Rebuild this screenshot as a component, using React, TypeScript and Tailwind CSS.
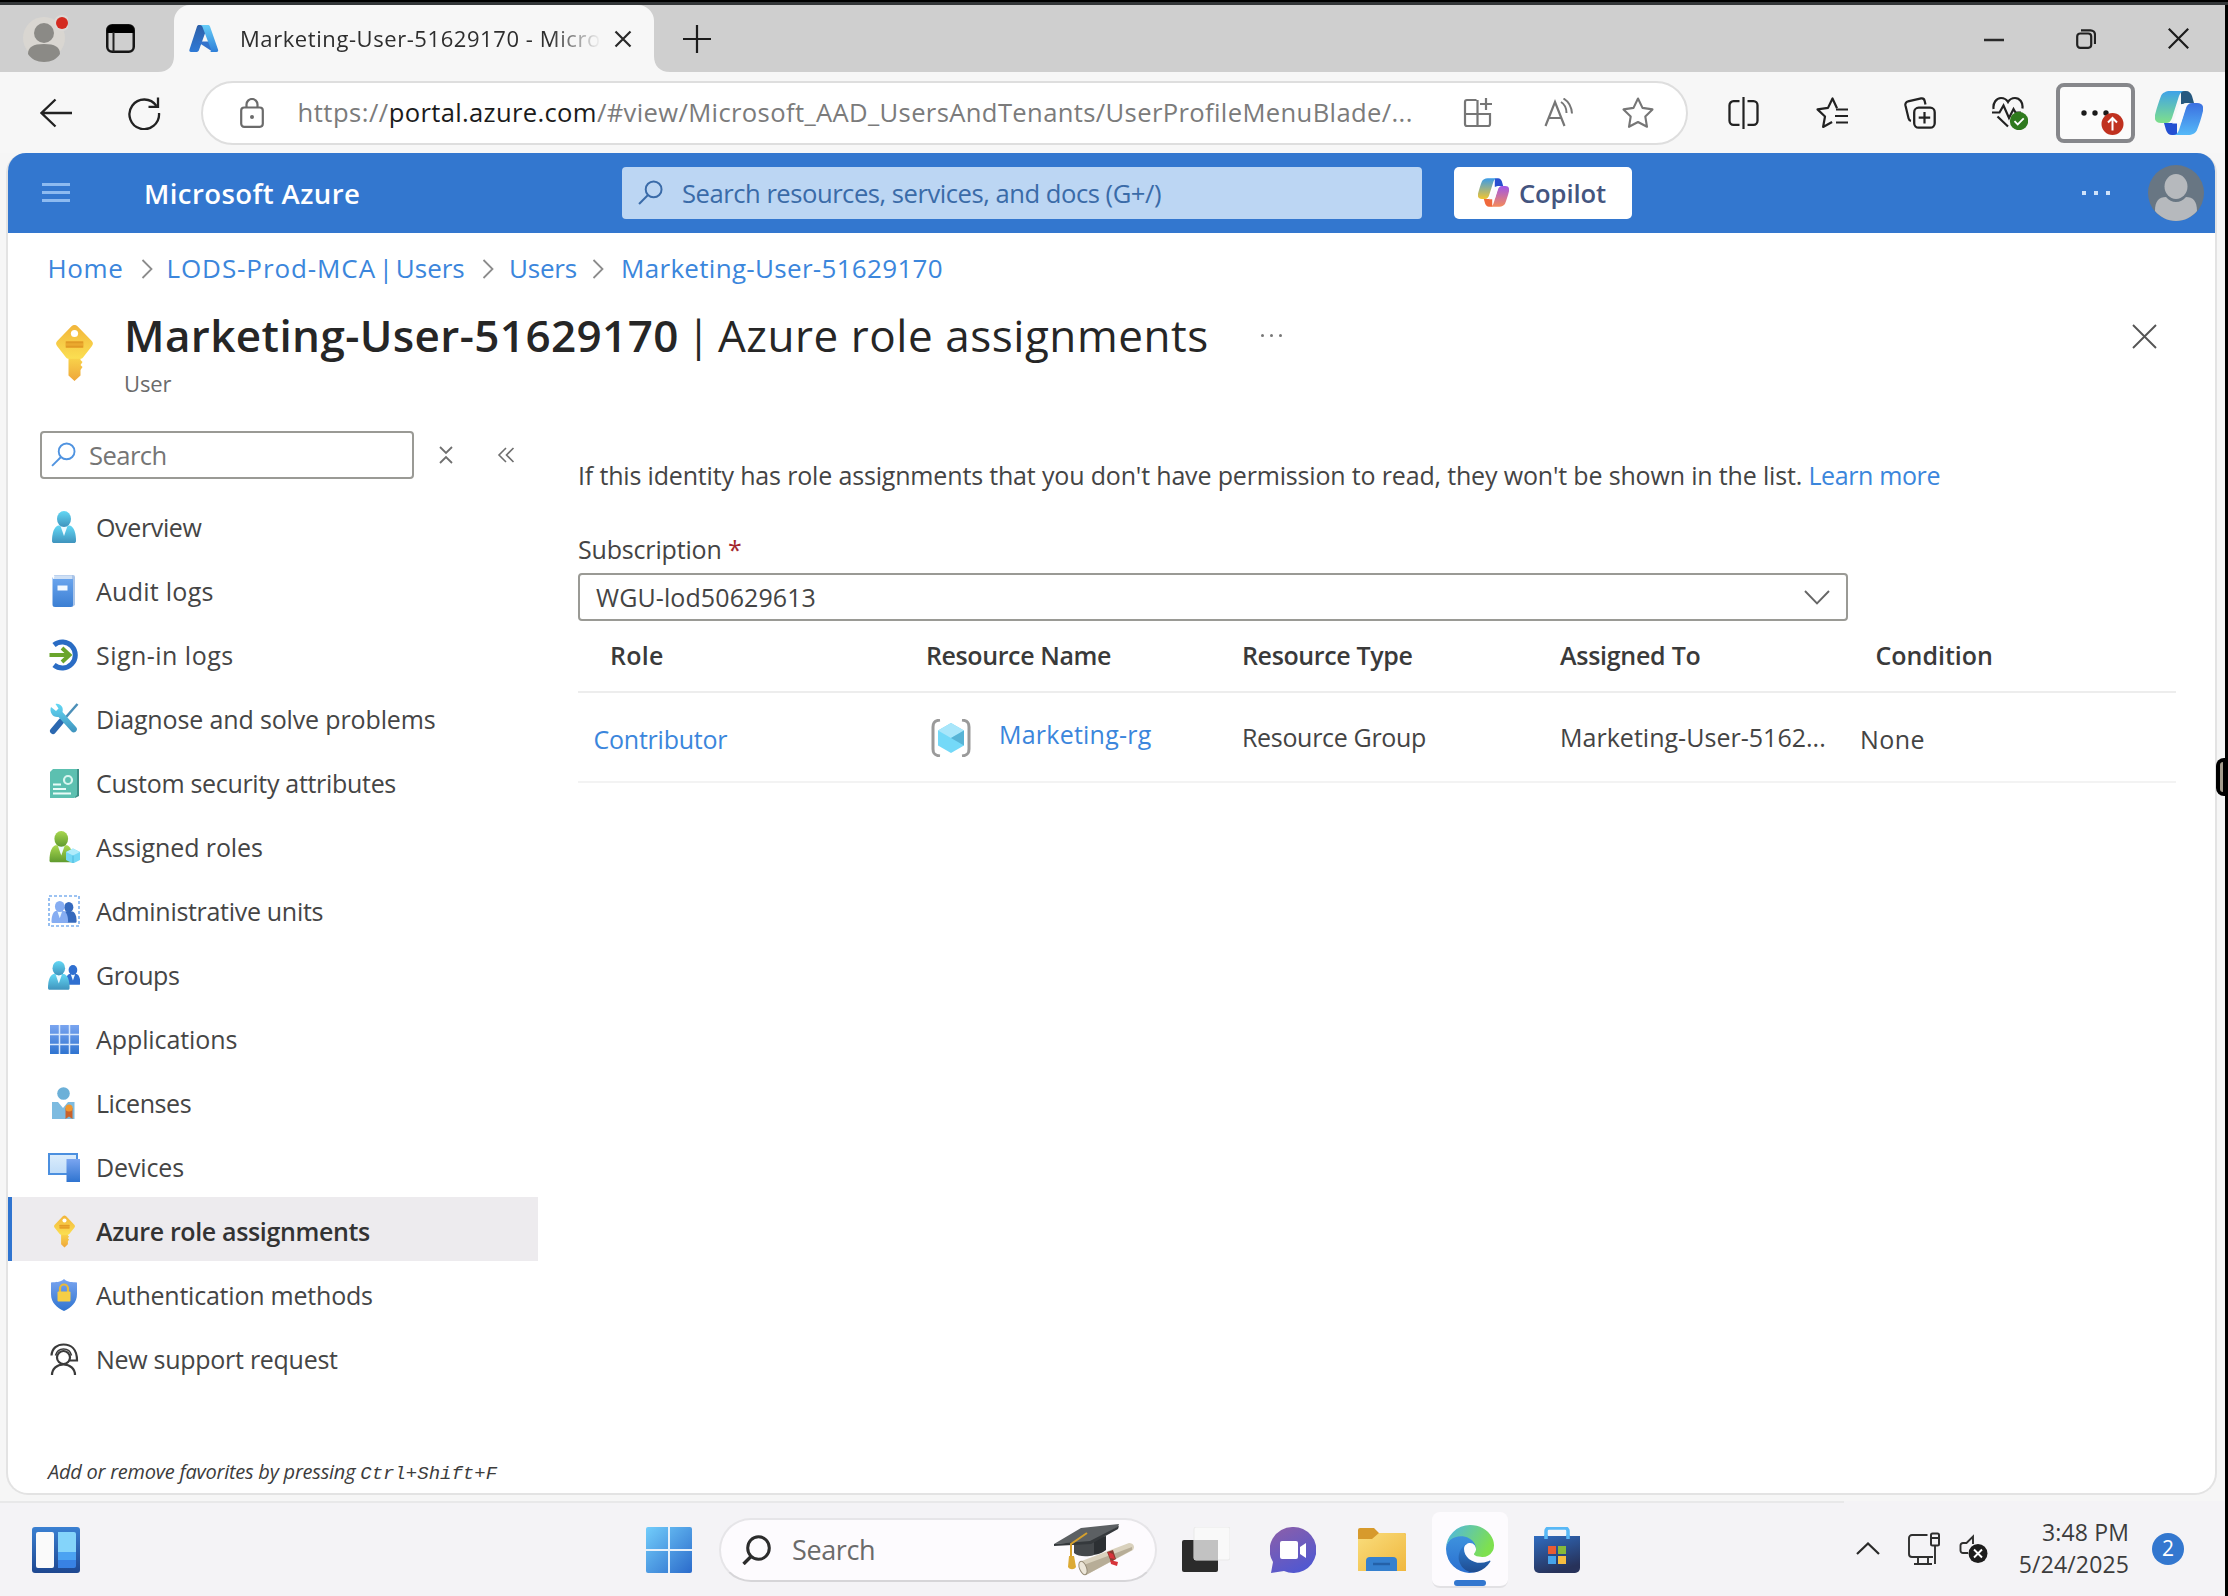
import type { ReactNode } from "react";

type SvgProps = { w: number; h: number; box?: string; className?: string; children: ReactNode };

function Svg({ w, h, box, className = "", children }: SvgProps) {
  return (
    <svg width={w} height={h} viewBox={box ?? `0 0 ${w} ${h}`} fill="none" className={`shrink-0 ${className}`}>
      {children}
    </svg>
  );
}

/* Gradients shared by the icons of the page */
function Gradients() {
  const defs: [string, string, string, number, number][] = [
    ["cyan", "#63d8f5", "#3f93bd", 0, 1],
    ["blue", "#7aa5f0", "#2f74d0", 0, 1],
    ["book", "#6aa5ee", "#3c7fd3", 0, 1],
    ["green", "#a9d84f", "#5f9a2e", 0, 1],
    ["keyTop", "#f2b53a", "#fbdf52", 0, 1],
    ["keyStem", "#fbdc4e", "#eea63a", 0, 1],
    ["azDark", "#2d5fa8", "#2f7ad6", 0, 1],
    ["azLight", "#66cdf8", "#2e7fd8", 0, 1],
    ["win", "#72cdfb", "#2b6bcb", 1, 1],
    ["chat", "#8e5fa8", "#5358cf", 0.5, 1],
    ["folder", "#f9dd7c", "#f0b73e", 1, 1],
    ["store", "#2f6cc0", "#27325a", 0.4, 1],
    ["edgeA", "#2f7fd6", "#1f4c8f", 0, 1],
    ["edgeB", "#3f94de", "#2a6fd0", 0, 1],
    ["edgeC", "#4db4ec", "#7ee04f", 1, 0.4],
    ["cpA", "#3fa2e8", "#7fe08a", 0, 1],
    ["cpB", "#3b6fe0", "#55b9f8", 0, 1],
    ["cpC", "#3b9ce8", "#f2c530", 0, 1],
    ["cpD", "#a056e8", "#f58a5a", 0, 1],
    ["widget", "#3a80d2", "#1e4790", 0, 1],
    ["screen", "#dcedfc", "#bfdcf8", 0, 1],
  ];
  return (
    <svg width="0" height="0" className="absolute">
      <defs>
        {defs.map(([id, a, b, x, y]) => (
          <linearGradient key={id} id={id} x1="0" y1="0" x2={x} y2={y}>
            <stop offset="0" stopColor={a} />
            <stop offset="1" stopColor={b} />
          </linearGradient>
        ))}
      </defs>
    </svg>
  );
}

function CopilotMark({ size, color = false }: { size: number; color?: boolean }) {
  return (
    <Svg w={size} h={size} box="0 0 48 48">
      <path d="M26 2h5c3 0 5 2 6 5l2 7h-8c-3 0-4 2-5 5z" fill={color ? "#2a4fd0" : "#26587f"} />
      <path d="M22 46h-5c-3 0-5-2-6-5l-2-7h8c3 0 4-2 5-5z" fill={color ? "#f0693c" : "#2450d2"} />
      <path d="M15 2h15c-3 0-5 2-6 5l-7 22c-1 3-3 5-6 5H6c-5 0-7-3-6-8 2-8 4-14 6-19 1-3 5-5 9-5z" fill={color ? "url(#cpC)" : "url(#cpA)"} />
      <path d="M33 46H18c3 0 5-2 6-5l7-22c1-3 3-5 6-5h5c5 0 7 3 6 8-2 8-4 14-6 19-1 3-5 5-9 5z" fill={color ? "url(#cpD)" : "url(#cpB)"} />
      <path d="M27 15h5c-1 1-1 2-1.500 4l-4 13c-.5 1.500-1.500 2.500-3 2.500H17c1-.5 1.500-1.500 2-3.500l4.500-13c.5-2 1.500-3 3.500-3z" fill="#fbfbfd" />
    </Svg>
  );
}

function TitleBar() {
  return (
    <div className="flex h-[67px] items-center bg-[#cfcfcf]">
      <Svg w={46} h={50} className="ml-[22px]">
        <circle cx="22" cy="24" r="21" fill="#d9d6d1" />
        <circle cx="22" cy="19" r="10" fill="#8b8a86" />
        <path d="M6 40c0-7 5-10 16-10s16 3 16 10c-3 5-9 8-16 8s-13-3-16-8z" fill="#8b8a86" />
        <circle cx="40" cy="9" r="8" fill="#dcd9d6" />
        <circle cx="40" cy="9" r="6" fill="#d42b20" />
      </Svg>
      <Svg w={29} h={29} className="ml-[38px]">
        <rect x="1.250" y="1.250" width="26.500" height="26.500" rx="5" stroke="#161616" strokeWidth="2.500" />
        <path d="M1 9V6a5 5 0 0 1 5-5h17a5 5 0 0 1 5 5v3z" fill="#000" />
        <path d="M7.500 8v20" stroke="#222" strokeWidth="2" />
      </Svg>
      <div className="relative ml-[39px] flex h-full w-[480px] items-center rounded-t-2xl bg-[#f7f7f7]">
        <Svg w={16} h={16} className="absolute bottom-0 -left-4">
          <path d="M16 0v16H0C10 16 16 10 16 0z" fill="#f7f7f7" />
        </Svg>
        <Svg w={16} h={16} className="absolute -right-4 bottom-0">
          <path d="M0 0v16h16C6 16 0 10 0 0z" fill="#f7f7f7" />
        </Svg>
        <Svg w={30} h={29} className="ml-[15px]">
          <path d="M10 1h9L10 26c-.5 1.500-1.500 2-3 2H2c-1.500 0-2-1-1.500-2.500L8 2.500C8.400 1.500 9 1 10 1z" fill="url(#azDark)" />
          <path d="M8 17.500h14l2 10.500z" fill="#3473cc" />
          <path d="M11 1h8c1 0 1.600.5 2 1.500l8 23c.5 1.500 0 2.500-1.500 2.500H20.500c1.500 0 2-1 1.500-2.500L13.500 3c-.3-1-1-2-2.500-2z" fill="url(#azLight)" />
        </Svg>
        <div className="w-[379px] shrink-0 pl-[21px]">
          <span className="inline-block mask-r-from-86% text-[22px] tracking-[0.026em] text-[#2e2e2e]">Marketing-User-51629170 - Micro</span>
        </div>
        <Svg w={18} h={18} className="ml-4">
          <path d="M1.500 1.500l15 15M16.500 1.500l-15 15" stroke="#2a2a2a" strokeWidth="2.200" />
        </Svg>
      </div>
      <Svg w={28} h={28} className="ml-[29px]">
        <path d="M14 0v28M0 14h28" stroke="#1c1c1c" strokeWidth="2.200" />
      </Svg>
      <div className="mr-9 ml-auto flex items-center gap-[72px]">
        <Svg w={20} h={20}>
          <path d="M0 11h20" stroke="#2a2a2a" strokeWidth="2.500" />
        </Svg>
        <Svg w={20} h={20}>
          <rect x="1.200" y="4.500" width="14" height="14.300" rx="3" stroke="#222" strokeWidth="2.200" />
          <path d="M5 1.300h9.500a4.500 4.500 0 0 1 4.500 4.500V15" stroke="#222" strokeWidth="2.200" />
        </Svg>
        <Svg w={21} h={21}>
          <path d="M.8.8l19.400 19.400M20.200.8L.8 20.200" stroke="#1c1c1c" strokeWidth="2.200" />
        </Svg>
      </div>
    </div>
  );
}

function Toolbar() {
  return (
    <div className="flex h-[81px] items-center bg-[#f7f7f7]">
      <Svg w={32} h={30} className="ml-10">
        <path d="M32 15H2M15.500 1.500L1.500 15l14 13.500" stroke="#222" strokeWidth="2.300" />
      </Svg>
      <Svg w={34} h={34} className="ml-[55px]">
        <path d="M29.500 10A14.800 14.800 0 1 0 32 17" stroke="#222" strokeWidth="2.300" />
        <path d="M31 1.500v9.300h-9.500" stroke="#222" strokeWidth="2.300" />
      </Svg>
      <div className="ml-10 flex h-16 w-[1487px] items-center rounded-full border-2 border-[#dedede] bg-white">
        <Svg w={24} h={30} className="ml-[37px]">
          <rect x="1.200" y="9.500" width="21.600" height="19.300" rx="3" stroke="#6b6b6b" strokeWidth="2.200" />
          <path d="M6.500 9.500V6.500a5.500 5.500 0 0 1 11 0v3" stroke="#6b6b6b" strokeWidth="2.200" />
          <circle cx="12" cy="19" r="2" fill="#6b6b6b" />
        </Svg>
        <div className="ml-[33.500px] pt-[2px] text-[25.600px] text-[#7b7b7b]">
          <span className="tracking-[0.019em]">https://</span>
          <span className="tracking-[0.013em] text-[#1b1b1b]">portal.azure.com</span>
          <span className="tracking-[0.0142em]">/#view/Microsoft_AAD_UsersAndTenants/UserProfileMenuBlade/...</span>
        </div>
        <Svg w={31} h={31} className="ml-auto">
          <path d="M13.500 3H4a2 2 0 0 0-2 2v22a2 2 0 0 0 2 2h21a2 2 0 0 0 2-2V17H2M14.500 3v26" stroke="#767676" strokeWidth="2.200" />
          <path d="M23 1v12M17 7h12" stroke="#767676" strokeWidth="2.200" />
        </Svg>
        <Svg w={30} h={30} className="ml-[50px]">
          <path d="M1.500 28L11 4l9.500 24M5 20h12" stroke="#767676" strokeWidth="2.200" />
          <path d="M17 4c4 2.500 5.500 6 5.500 11M19.500.5c5 3 8 8 8.500 15" stroke="#767676" strokeWidth="2" />
        </Svg>
        <Svg w={32} h={32} className="mr-[32px] ml-[48px]">
          <path d="M16 1.500l4.500 9.400 10 1.500-7.200 7.100 1.700 10.300L16 25l-9 4.800 1.700-10.300-7.200-7.100 10-1.500z" stroke="#767676" strokeWidth="2.100" strokeLinejoin="round" />
        </Svg>
      </div>
      <Svg w={31} h={32} className="ml-10">
        <path d="M15.500 0v32" stroke="#222" strokeWidth="2.200" />
        <path d="M11.500 4.200H5.500a4 4 0 0 0-4 4v15.600a4 4 0 0 0 4 4h6M19.500 4.200h6a4 4 0 0 1 4 4v15.600a4 4 0 0 1-4 4h-6" stroke="#222" strokeWidth="2.300" />
      </Svg>
      <Svg w={32} h={32} className="ml-[57px]">
        <path d="M21 11.200L16.500 1.500l-4.500 9.400-10.500 1.500 7.500 7.100-1.900 10.500 9-5" stroke="#222" strokeWidth="2.200" strokeLinejoin="round" />
        <path d="M20 12.500h12M19 19h13M20 25.500h12" stroke="#222" strokeWidth="2.200" />
      </Svg>
      <Svg w={32} h={32} className="ml-14">
        <rect x="10.200" y="10.700" width="20.500" height="20" rx="4.500" stroke="#222" strokeWidth="2.300" />
        <path d="M20.500 15v11.500M14.700 20.700h11.500" stroke="#222" strokeWidth="2.200" />
        <path d="M21.500 7.500L20.600 3.700a3 3 0 0 0-3.500-2.300L4 4.400A3.300 3.300 0 0 0 1.400 8.300L4.600 21.500a3 3 0 0 0 2.400 2.300" stroke="#222" strokeWidth="2.200" />
      </Svg>
      <Svg w={36} h={34} className="ml-14">
        <path d="M1.600 13C.6 7 4.500 2 9 2c3 0 5.500 1.500 7 4 1.500-2.500 4-4 7-4 4.700 0 8.300 4.500 7.400 10.500M5.500 20.500L16 30.500" stroke="#222" strokeWidth="2.200" />
        <path d="M0 16.500h7.500l4-7 5.500 12.500 4.500-9 2 3.500H29" stroke="#222" strokeWidth="2.200" />
        <circle cx="27" cy="25" r="9.200" fill="#2f7a1e" />
        <path d="M22.500 25.200l3.200 3.200 6-6" stroke="#fff" strokeWidth="1.800" />
      </Svg>
      <div className="relative ml-7 flex h-[60px] w-[79px] items-center rounded-lg border-4 border-[#86878b] bg-[#fbfbfb]">
        <Svg w={60} h={50} className="ml-1">
          <circle cx="20" cy="25" r="2.700" fill="#1a1a1a" />
          <circle cx="31" cy="25" r="2.700" fill="#1a1a1a" />
          <circle cx="42" cy="25" r="2.700" fill="#1a1a1a" />
          <circle cx="48.500" cy="36" r="11" fill="#c0311f" />
          <path d="M48.500 42.500V31M44 34.500l4.500-4.500 4.500 4.500" stroke="#fff" strokeWidth="2" />
        </Svg>
      </div>
      <div className="ml-5">
        <CopilotMark size={48} />
      </div>
    </div>
  );
}

function Magnifier({ size, color, width }: { size: number; color: string; width: number }) {
  return (
    <Svg w={size} h={size} box="0 0 24 24">
      <circle cx="15" cy="9" r="7.600" stroke={color} strokeWidth={width} />
      <path d="M9.600 14.400L1 23" stroke={color} strokeWidth={width} />
    </Svg>
  );
}

function AzureHeader() {
  return (
    <div className="flex h-20 items-center rounded-t-[18px] bg-[#3377cf]">
      <div className="ml-[34px] flex w-7 flex-col gap-[5px]">
        <div className="h-[3px] bg-[#8dbaf0]" />
        <div className="h-[3px] bg-[#8dbaf0]" />
        <div className="h-[3px] bg-[#8dbaf0]" />
      </div>
      <div className="ml-[74px] w-[478px] pt-[2px] text-[27.500px] font-semibold tracking-[0.015em] text-white">Microsoft Azure</div>
      <div className="flex h-[52px] w-[800px] items-center rounded-[4px] bg-[#bcd6f3]">
        <div className="ml-4">
          <Magnifier size={25} color="#3a6ba8" width={1.9} />
        </div>
        <div className="ml-[19px] pt-[2px] text-[25.600px] tracking-[-0.0185em] text-[#3a6ba8]">Search resources, services, and docs (G+/)</div>
      </div>
      <div className="ml-8 flex h-[52px] w-[178px] items-center rounded-[5px] bg-white">
        <div className="ml-6">
          <CopilotMark size={31} color />
        </div>
        <div className="ml-[10px] pt-[2px] text-[25.600px] font-semibold tracking-[-0.0044em] text-[#44557f]">Copilot</div>
      </div>
      <div className="ml-auto flex gap-2">
        <div className="size-1 bg-[#cfe2fa]" />
        <div className="size-1 bg-[#cfe2fa]" />
        <div className="size-1 bg-[#cfe2fa]" />
      </div>
      <Svg w={56} h={56} className="mr-[11.500px] ml-[38px]">
        <circle cx="28" cy="28" r="28" fill="#687683" />
        <ellipse cx="28" cy="21.500" rx="11.500" ry="12.500" fill="#b6b9bd" />
        <path d="M7 46c0-10 4-14 11-14 3 3.500 6 5 10 5s7-1.500 10-5c7 0 11 4 11 14-5 6-12.500 10-21 10S12 52 7 46z" fill="#b6b9bd" />
      </Svg>
    </div>
  );
}

function Crumb({ className = "" }: { className?: string }) {
  return (
    <Svg w={12} h={20} className={className}>
      <path d="M1.500 1l9 9-9 9" stroke="#8c8c8c" strokeWidth="1.800" />
    </Svg>
  );
}

function KeyIcon({ w, h }: { w: number; h: number }) {
  return (
    <Svg w={w} h={h} box="0 0 37 56">
      <path d="M12.500 28h12v7l2 2-2 3 2 2-2 3v5.500L18.500 56l-6-5.500z" fill="url(#keyStem)" />
      <path d="M15.500 1.200a4.200 4.200 0 0 1 6 0L35.800 16a4 4 0 0 1 0 5.200L27 32.500a3 3 0 0 1-2.400 1.200H12.400A3 3 0 0 1 10 32.500L1.200 21.200a4 4 0 0 1 0-5.200z" fill="url(#keyTop)" />
      <circle cx="18.500" cy="8.500" r="3.600" fill="#fff" />
      <rect x="9.500" y="16" width="18" height="7" rx="1" fill="#eba92f" />
      <path d="M10 17.500h17M10 21.500h17" stroke="#e09a25" strokeWidth="1.500" />
    </Svg>
  );
}

function Person({ x, y, s, fill, tie = true }: { x: number; y: number; s: number; fill: string; tie?: boolean }) {
  return (
    <g transform={`translate(${x} ${y}) scale(${s})`}>
      <path d="M0 30c0-8 2-14 6-15.500h12C22 16 24 22 24 30c0 1.500-1 2-2 2H2c-1 0-2-.5-2-2z" fill={fill} />
      {tie && <path d="M8.500 15h7L12 25z" fill="#eefaff" />}
      <ellipse cx="12" cy="8" rx="7" ry="8" fill={fill} />
    </g>
  );
}

const navIcons: Record<string, ReactNode> = {
  Overview: <Person x={4} y={0} s={1} fill="url(#cyan)" />,
  "Audit logs": (
    <>
      <path d="M6 0h19a2 2 0 0 1 2 2v28l-3 2z" fill="#a9c4e8" />
      <path d="M7 .5h17v4H5z" fill="#cfe0f5" />
      <path d="M5 2.500v1.500h20v26a2 2 0 0 1-2 2H7a2.500 2.500 0 0 1-2.500-2.500V2.500z" fill="url(#book)" />
      <rect x="9.500" y="10.500" width="10" height="5" fill="#f2f8ff" />
    </>
  ),
  "Sign-in logs": (
    <>
      <path d="M6 6A13 13 0 1 1 6 26" stroke="#2a6cc4" strokeWidth="5" />
      <path d="M1.500 16h19M14 9l7.500 7-7.500 7" stroke="#6aa52c" strokeWidth="4" />
    </>
  ),
  "Diagnose and solve problems": (
    <>
      <path d="M29.500 1L15 17.500" stroke="#4c8fb8" strokeWidth="2.500" />
      <path d="M13 18.500L5 28" stroke="#2b68b0" strokeWidth="6" strokeLinecap="round" />
      <path d="M3 4l5 4 2.500-2.500L7.500 1C12 0 16 4 14.500 9L28 24c3 3-1.500 7.500-4.500 4.500L10.500 14C5 15 1 9 3 4z" fill="url(#cyan)" />
    </>
  ),
  "Custom security attributes": (
    <>
      <path d="M5 2h26v27l-4 2z" fill="#3d8f86" />
      <path d="M2 5l3-3h24v26l-3 3H2z" fill="#5cc0b0" />
      <circle cx="20" cy="13" r="4" stroke="#d9f5ef" strokeWidth="2.200" />
      <path d="M5 17.500h8M5 22h13M5 26.500h18" stroke="#e9fbf7" strokeWidth="2" />
    </>
  ),
  "Assigned roles": (
    <>
      <Person x={1.5} y={0} s={0.98} fill="url(#green)" />
      <path d="M25 17.500l7 3.500v8l-7 3.500-7-3.500v-8z" fill="#74d8f5" />
      <path d="M25 17.500l7 3.500-7 3.500-7-3.500z" fill="#b0ecfb" />
      <path d="M25 24.500v8" stroke="#4fb8dc" />
    </>
  ),
  "Administrative units": (
    <>
      <rect x="1" y="1" width="30" height="30" stroke="#7db0ee" strokeWidth="1.600" strokeDasharray="3 2" />
      <Person x={13} y={7} s={0.65} fill="#3569bd" tie={false} />
      <Person x={3.5} y={6} s={0.69} fill="#86adf2" />
    </>
  ),
  Groups: (
    <>
      <Person x={17.5} y={6} s={0.62} fill="#2f6fd0" />
      <Person x={0} y={2} s={0.9} fill="url(#cyan)" />
    </>
  ),
  Applications: (
    <>
      <rect x="2" y="2" width="29" height="29" fill="url(#blue)" />
      <path d="M11.500 2v29M21.500 2v29M2 11.500h29M2 21.500h29" stroke="#d8e8fb" strokeWidth="1.500" />
    </>
  ),
  Licenses: (
    <>
      <circle cx="15.500" cy="6.500" r="6.300" fill="#6cb0d8" />
      <path d="M4 15h6l5 6 5-6h6.500v17H4z" fill="#7dbbe0" />
      <path d="M17.500 21v11l3.500-2.500 3.500 2.500V21z" fill="#c9622a" />
      <circle cx="21" cy="21" r="3.600" fill="#f0962f" />
    </>
  ),
  Devices: (
    <>
      <rect x="1" y="3" width="28" height="20" fill="url(#screen)" stroke="#4b8fdf" strokeWidth="2" />
      <rect x="18.500" y="8" width="13.500" height="23" fill="url(#blue)" />
    </>
  ),
  "Authentication methods": (
    <>
      <path d="M16 0c4 3.500 8 3 13 3.500V15c0 9-6 13.500-13 17C9 28.500 3 24 3 15V3.500C8 3 12 3.500 16 0z" fill="url(#blue)" />
      <path d="M12 13v-3.500a4 4 0 0 1 8 0V13" stroke="#e8b93a" strokeWidth="2.200" />
      <rect x="9.500" y="12.500" width="13" height="10" rx="1" fill="#f6ce45" />
    </>
  ),
  "New support request": (
    <>
      <path d="M3.500 12.500C4 5 9.500 1.500 15.500 1.500 23 1.500 29 6 29 17.500h-8.500" stroke="#3a3a3a" strokeWidth="2.200" />
      <circle cx="15.500" cy="14.500" r="6.500" stroke="#3a3a3a" strokeWidth="2.200" />
      <path d="M7.500 12.500C9 7 12 6 15.500 6s7 2 8 6.500" stroke="#3a3a3a" strokeWidth="1.600" />
      <path d="M4 32c0-6.500 5-10.500 11.500-10.500S27 25.500 27 32" stroke="#3a3a3a" strokeWidth="2.200" />
    </>
  ),
};

const nav = [
  { label: "Overview", cls: "tracking-[-0.0144em]" },
  { label: "Audit logs", cls: "tracking-[0.0108em]" },
  { label: "Sign-in logs", cls: "tracking-[0.0187em]" },
  { label: "Diagnose and solve problems", cls: "tracking-[-0.0056em]" },
  { label: "Custom security attributes", cls: "tracking-[-0.0124em]" },
  { label: "Assigned roles", cls: "tracking-[-0.004em]" },
  { label: "Administrative units", cls: "tracking-[-0.0121em]" },
  { label: "Groups", cls: "tracking-[-0.0165em]" },
  { label: "Applications", cls: "tracking-[-0.0036em]" },
  { label: "Licenses", cls: "tracking-[-0.0172em]" },
  { label: "Devices", cls: "tracking-[-0.0053em]" },
  { label: "Azure role assignments", cls: "tracking-[-0.0144em]", selected: true },
  { label: "Authentication methods", cls: "tracking-[-0.0089em]" },
  { label: "New support request", cls: "tracking-[-0.0111em]" },
];

function Sidebar() {
  return (
    <div className="flex w-[530px] flex-col">
      <div className="mt-[23px] flex h-12 items-center">
        <div className="ml-8 flex h-12 w-[374px] items-center rounded-[4px] border-2 border-[#9a9a95]">
          <div className="ml-[9px]">
            <Magnifier size={25} color="#4f93e0" width={1.8} />
          </div>
          <div className="ml-[13px] pt-[2px] text-[25.600px] tracking-[-0.0222em] text-[#757575]">Search</div>
        </div>
        <Svg w={14} h={18} className="ml-[25px]">
          <path d="M1 1l6 6 6-6M1 17l6-6 6 6" stroke="#6f6f6f" strokeWidth="1.800" />
        </Svg>
        <Svg w={18} h={16} className="ml-11">
          <path d="M9 1L2 8l7 7M16.500 1l-7 7 7 7" stroke="#6f6f6f" strokeWidth="1.600" />
        </Svg>
      </div>
      <div className="mt-[14px]">
        {nav.map((n) => (
          <div key={n.label} className={`flex h-16 items-center pt-[5px] ${n.selected ? "border-l-4 border-[#2f74d0] bg-[#edebee] pl-9" : "pl-10"}`}>
            {n.selected ? (
              <div className="flex w-8 justify-center">
                <KeyIcon w={21} h={33} />
              </div>
            ) : (
              <Svg w={32} h={32}>
                {navIcons[n.label]}
              </Svg>
            )}
            <div className={`ml-4 text-[25px] ${n.cls} ${n.selected ? "font-semibold text-[#333]" : "text-[#454545]"}`}>{n.label}</div>
          </div>
        ))}
      </div>
      <div className="mt-[68px] ml-10 text-[20px] leading-[30px] text-[#3c3c3c] italic">
        <span className="tracking-[-0.012em]">Add or remove favorites by pressing </span>
        <span className="font-['Liberation_Mono'] text-[19px]">Ctrl+Shift+F</span>
      </div>
    </div>
  );
}

function RoleTable() {
  return (
    <div>
      <div className="flex h-[72px] items-center border-b-2 border-[#ededed] pl-[32px] text-[25px] font-semibold text-[#3a3a3a]">
        <div className="w-[316px] tracking-[0.0107em]">Role</div>
        <div className="w-[316px] tracking-[-0.0157em]">Resource Name</div>
        <div className="w-[318px] tracking-[-0.0148em]">Resource Type</div>
        <div className="w-[315.500px] tracking-[-0.0106em]">Assigned To</div>
        <div className="tracking-[-0.001em]">Condition</div>
      </div>
      <div className="flex h-[90px] items-center border-b-2 border-[#f3f3f3] pt-[2px] pl-[15.500px] text-[25px] text-[#444]">
        <div className="w-[337px] pt-1 tracking-[-0.0093em] text-[#3b86dc]">Contributor</div>
        <Svg w={40} h={38}>
          <path d="M9 1C4 1.500 2 3 2 8v22c0 5 2 6.500 7 7M31 1c5 .5 7 2 7 7v22c0 5-2 6.500-7 7" stroke="#9a9a9a" strokeWidth="3" />
          <path d="M20 4l13 7.500v15L20 34 7 26.500v-15z" fill="#74d9f8" />
          <path d="M20 4l13 7.500L20 19 7 11.500z" fill="#a9e6fa" />
          <path d="M20 19l13-7.500v15z" fill="#57b4d6" />
        </Svg>
        <div className="ml-[28.500px] w-[243px] pb-[7px] tracking-[0.0093em] text-[#3b86dc]">Marketing-rg</div>
        <div className="w-[318px] tracking-[-0.013em]">Resource Group</div>
        <div className="w-[300px] tracking-[0.001em]">Marketing-User-5162...</div>
        <div className="pt-1 tracking-[0.019em]">None</div>
      </div>
    </div>
  );
}

function Main() {
  return (
    <div className="ml-10 w-[1598px]">
      <div className="mt-[47px] text-[25px] leading-10 text-[#444]">
        <span className="tracking-[-0.0066em]">If this identity has role assignments that you don't have permission to read, they won't be shown in the list. </span>
        <span className="tracking-[-0.0154em] text-[#3b86dc]">Learn more</span>
      </div>
      <div className="mt-[34px] text-[25px] leading-10 tracking-[-0.007em] text-[#444]">
        Subscription <span className="text-[#a4262c]">*</span>
      </div>
      <div className="mt-1 flex h-12 w-[1270px] items-center justify-between rounded-[4px] border-2 border-[#9a9a95]">
        <div className="ml-4 pt-[2px] text-[25px] tracking-[0.0039em] text-[#444]">WGU-lod50629613</div>
        <Svg w={26} h={15} className="mt-[2px] mr-4">
          <path d="M1 1l12 12.500L25 1" stroke="#666" strokeWidth="1.900" />
        </Svg>
      </div>
      <RoleTable />
    </div>
  );
}

function Blade() {
  return (
    <div className="flex h-[1261px] flex-col">
      <div className="flex h-[72px] items-center pl-[39.500px] text-[26px] text-[#3b86dc]">
        <span className="w-[93px] tracking-[0.025em]">Home</span>
        <Crumb />
        <span className="ml-[14px] w-[315.500px] [word-spacing:-4px]">
          <span className="tracking-[0.035em]">LODS-Prod-MCA</span> | Users
        </span>
        <Crumb />
        <span className="ml-[15px] w-[83px] tracking-[-0.008em]">Users</span>
        <Crumb />
        <span className="ml-[17px] tracking-[0.0118em]">Marketing-User-51629170</span>
      </div>
      <div className="flex h-[103px] items-start pl-12">
        <div className="mt-5">
          <KeyIcon w={37} h={56} />
        </div>
        <div className="ml-[31px]">
          <div className="flex h-[60px] items-center text-[44px] text-[#262626]">
            <span className="w-[563px] font-semibold tracking-[0.009em]">Marketing-User-51629170</span>
            <span className="w-[31px] text-[42px]">|</span>
            <span className="tracking-[0.0124em]">Azure role assignments</span>
            <div className="mt-[2px] ml-[52px] flex gap-[6px]">
              <div className="size-[3px] rounded-full bg-[#777]" />
              <div className="size-[3px] rounded-full bg-[#777]" />
              <div className="size-[3px] rounded-full bg-[#777]" />
            </div>
          </div>
          <div className="mt-[2px] text-[22px] leading-[32px] tracking-[-0.0057em] text-[#6b6b6b]">User</div>
        </div>
        <Svg w={25} h={25} className="mt-[19px] mr-[58.500px] ml-auto">
          <path d="M1 1l23 23M24 1L1 24" stroke="#555" strokeWidth="1.900" />
        </Svg>
      </div>
      <div className="flex">
        <Sidebar />
        <Main />
      </div>
    </div>
  );
}

function Taskbar() {
  return (
    <div className="flex h-[95px] bg-[#f4f3f6]">
      <div className="flex w-[1844px] items-center border-t-2 border-[#e8e8e9]">
        <Svg w={48} h={46} className="ml-8">
          <rect width="48" height="46" rx="3" fill="url(#widget)" />
          <rect x="4" y="5" width="18" height="36" rx="2" fill="#fafafa" />
          <path d="M26 5h16a2 2 0 0 1 2 2v18H26z" fill="#84d4fa" />
          <path d="M26 25h18v8H26z" fill="#4ba3f2" />
          <path d="M26 33h18v6a2 2 0 0 1-2 2H26z" fill="#3882e4" />
        </Svg>
        <Svg w={46} h={46} className="ml-[566px]">
          <rect width="46" height="46" rx="2" fill="url(#win)" />
          <path d="M23 0v46M0 23h46" stroke="#e8f1fa" strokeWidth="2" />
        </Svg>
        <div className="ml-[27px] flex h-16 w-[438px] items-center rounded-full border-2 border-[#e6e5e8] border-b-[#d6d5d8] bg-[#fdfbfe]">
          <div className="ml-[20px]">
            <Svg w={30} h={30}>
              <ellipse cx="17.500" cy="13" rx="10.800" ry="11.300" stroke="#2c2c2c" strokeWidth="3" />
              <path d="M10 21.500L2.500 29" stroke="#2c2c2c" strokeWidth="3.400" />
            </Svg>
          </div>
          <div className="ml-[21px] pt-px text-[27px] tracking-[-0.0143em] text-[#6a6a6a]">Search</div>
          <Svg w={82} h={52} className="mr-[20px] ml-auto">
            <path d="M21 16v12c4 5 24 5 32-2V12z" fill="#2c3033" />
            <path d="M21 18v11c4 4 14 4 20 2V16z" fill="#45494c" />
            <path d="M1 20L28 4l38-4-1 3-28 15z" fill="#5c6063" />
            <path d="M1 20l36-3 29-15-1 3-27 15-37 2z" fill="#35393c" />
            <path d="M34 9L18 20v19" stroke="#d5a02c" strokeWidth="2" />
            <path d="M16 32h5l2 11c-2 3-6 3-8 0z" fill="#dcaa35" />
            <path d="M26 38L76 19c5 0 6 4 4 7L33 51z" fill="#d9d1bd" />
            <path d="M28 42l51-19v3L33 51z" fill="#b7ad97" />
            <ellipse cx="30" cy="44" rx="3.500" ry="7" transform="rotate(-22 30 44)" fill="#ece6d8" stroke="#978d78" />
            <path d="M54 28l6-2 3 9-5 3z" fill="#8a3b30" />
            <path d="M55 28l5 2 2 5-5-1zM57 36l8 2-1 4-6-2z" fill="#d8333a" />
          </Svg>
        </div>
        <Svg w={48} h={46} className="ml-[25px]">
          <rect y="13" width="36" height="32" rx="2" fill="#2b2b2b" />
          <rect x="12" width="36" height="33" rx="2" fill="#f9f9f9" stroke="#e9e9e9" />
          <path d="M12 13h24v20H12z" fill="#c2c2c2" />
        </Svg>
        <Svg w={46} h={46} className="ml-10">
          <path d="M23 0a23 23 0 1 1-9 44L1 46l2-11A23 23 0 0 1 23 0z" fill="url(#chat)" />
          <rect x="10" y="14" width="18" height="18" rx="2" fill="#fff" />
          <path d="M30 20l6-4v15l-6-4z" fill="#fff" />
        </Svg>
        <Svg w={48} h={44} className="ml-[42px]">
          <path d="M0 2a2 2 0 0 1 2-2h14l5 5h25a2 2 0 0 1 2 2v8H0z" fill="#d79a2c" />
          <path d="M0 11h14l7-6h25a2 2 0 0 1 2 2v36H0z" fill="url(#folder)" />
          <path d="M8 43V33a4 4 0 0 1 4-4h23a4 4 0 0 1 4 4v10z" fill="#3580cf" />
          <path d="M15 36h17" stroke="#2461a8" strokeWidth="2.500" />
        </Svg>
        <div className="ml-[26px] flex h-[76px] w-[76px] flex-col items-center rounded-lg border-b-2 border-[#e2e1e4] bg-[#fdfbfe]">
          <Svg w={48} h={48} box="0 0 256 256" className="mt-[13px]">
            <path transform="translate(-4.630 -4.920)" d="M235.680 195.460a93.730 93.730 0 0 1-10.540 4.710 101.870 101.870 0 0 1-35.900 6.460c-47.320 0-88.540-32.550-88.540-74.320A31.480 31.480 0 0 1 117.130 105c-42.800 1.800-53.800 46.400-53.800 72.530 0 73.880 68.090 81.370 82.760 81.370 7.910 0 19.840-2.300 27-4.560l1.310-.44a128.340 128.340 0 0 0 66.600-52.800 4 4 0 0 0-5.320-5.640Z" fill="url(#edgeA)" />
            <path d="M105.730 241.340A79.200 79.200 0 0 1 83 220a80.720 80.720 0 0 1 29.530-120c3.120-1.470 8.450-4.130 15.540-4a32.350 32.350 0 0 1 25.690 13 31.880 31.880 0 0 1 6.360 18.660c0-.21 24.460-79.600-80-79.600-43.900 0-80 41.660-80 78.210a130.150 130.150 0 0 0 12.110 56 128 128 0 0 0 156.380 67.110 75.550 75.550 0 0 1-62.780-8Z" fill="url(#edgeB)" />
            <path d="M152.330 148.860c-.81 1.050-3.300 2.500-3.300 5.660 0 2.610 1.700 5.120 4.720 7.230 14.380 10 41.490 8.680 41.560 8.680a59.560 59.560 0 0 0 30.270-8.350 61.380 61.380 0 0 0 30.430-52.880c.26-22.410-8-37.310-11.340-43.910C223.460 23.840 177.720 0 128 0A128 128 0 0 0 0 126.200c.48-36.540 36.800-66.050 80-66.050 3.500 0 23.460.34 42 10.070 16.340 8.580 24.900 18.940 30.850 29.210 6.180 10.670 7.280 24.150 7.280 29.520s-2.740 13.330-7.800 19.910Z" fill="url(#edgeC)" />
          </Svg>
          <div className="mt-[7px] h-[6px] w-8 rounded-full bg-[#3377cf]" />
        </div>
        <Svg w={46} h={46} className="ml-[26px]">
          <path d="M12 12V4a3 3 0 0 1 3-3h16a3 3 0 0 1 3 3v8" stroke="#58b8f6" strokeWidth="3.500" />
          <path d="M0 9h46v32a5 5 0 0 1-5 5H5a5 5 0 0 1-5-5z" fill="url(#store)" />
          <path d="M12 8v4M34 8v4" stroke="#58b8f6" strokeWidth="3.500" />
          <rect x="14" y="19" width="8" height="8" fill="#e85c33" />
          <rect x="24" y="19" width="8" height="8" fill="#86b83a" />
          <rect x="14" y="29" width="8" height="8" fill="#46a3ea" />
          <rect x="24" y="29" width="8" height="8" fill="#f6bc3f" />
        </Svg>
      </div>
      <div className="flex items-center">
        <Svg w={24} h={13} className="ml-3">
          <path d="M1 12L12 1.500 23 12" stroke="#2a2a2a" strokeWidth="2.200" />
        </Svg>
        <Svg w={34} h={34} className="ml-7">
          <path d="M19.500 3H4a3 3 0 0 0-3 3v16a3 3 0 0 0 3 3h21M6 32h18M10 25v7M20 25v7" stroke="#2f2f2f" strokeWidth="1.900" />
          <rect x="23" y="1.500" width="8" height="12" rx="1.500" stroke="#2f2f2f" strokeWidth="2" />
          <path d="M23 6h8M27 13.500V32" stroke="#2f2f2f" strokeWidth="1.900" />
        </Svg>
        <Svg w={30} h={30} className="ml-[17px]">
          <path d="M9 19H4a2.500 2.500 0 0 1-2.500-2.500v-5A2.500 2.500 0 0 1 4 9h3.500L14 2.500V10" stroke="#2f2f2f" strokeWidth="1.900" />
          <circle cx="19" cy="19.500" r="9.500" fill="#1d1d1d" />
          <path d="M15 15.500l8 8M23 15.500l-8 8" stroke="#fff" strokeWidth="1.900" />
        </Svg>
        <div className="ml-[29px] w-[111px] pb-[2px] text-right text-[23px] leading-8 tracking-[0.006em] text-[#3c3c3c]">
          <div>3:48 PM</div>
          <div>5/24/2025</div>
        </div>
        <div className="ml-[23px] flex size-8 items-center justify-center rounded-full bg-[#3377cf] text-[21px] text-white">2</div>
      </div>
    </div>
  );
}

export default function App() {
  return (
    <div className="relative flex h-[1596px] w-[2228px] flex-col overflow-hidden bg-[#f6f6f6] font-['Open_Sans',sans-serif] whitespace-nowrap">
      <Gradients />
      <div className="h-[2px] bg-black" />
      <div className="h-[3px] bg-[#333638]" />
      <div className="flex flex-col border-r-[3px] border-black">
        <TitleBar />
        <Toolbar />
        <div className="mr-[8px] ml-[6px] flex h-[1342px] flex-col rounded-t-[20px] rounded-b-[22px] border-2 border-t-0 border-[#e3e3e3] bg-white">
          <AzureHeader />
          <Blade />
        </div>
        <div className="h-[6px]" />
        <Taskbar />
      </div>
      <div className="absolute top-[758px] right-0 flex h-[38px] w-3 items-center rounded-l-[8px] bg-black">
        <div className="ml-1 h-[30px] w-[3px] rounded-l-sm bg-[#a39b8c]" />
      </div>
    </div>
  );
}
